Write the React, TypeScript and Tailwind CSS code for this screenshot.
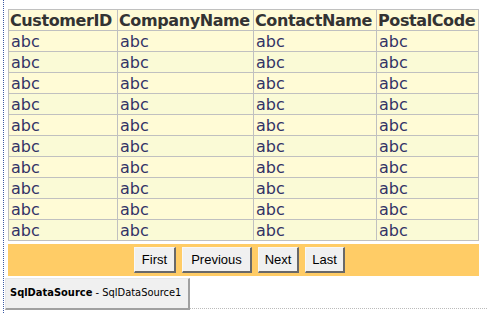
import React from "react";

const rows = Array.from({ length: 10 }, (_, i) => i);
const cols = ["CustomerID", "CompanyName", "ContactName", "PostalCode"];
const widths = [109, 136, 123, 102];

function Btn({ label, w }: { label: string; w: number }) {
  return (
    <div
      className="h-[26px] flex items-center justify-center bg-[#f0f0f0] border-t border-l border-t-[#f8f8f8] border-l-[#f8f8f8] border-b-2 border-r-2 border-b-[#696969] border-r-[#696969] text-[13px] text-black"
      style={{ width: w, fontFamily: '"Liberation Sans", Arial, sans-serif' }}
    >
      {label}
    </div>
  );
}

export default function App() {
  return (
    <div className="relative w-[487px] h-[313px] bg-white overflow-hidden">
      <div className="absolute left-[3px] top-0 bottom-0 border-l border-dotted border-[#3b5ba5]" />
      <div className="pl-[8px] pt-[9px]">
        <table
          className="border-collapse table-fixed w-[471px]"
          style={{ fontFamily: '"DejaVu Sans", Verdana, sans-serif' }}
        >
          <colgroup>
            {widths.map((w, i) => (
              <col key={i} style={{ width: w }} />
            ))}
          </colgroup>
          <thead>
            <tr className="bg-[#fffbd6]">
              {cols.map((c) => (
                <th
                  key={c}
                  className="border border-[#c0c0c0] h-[21px] p-0 pl-[1px] text-left font-bold text-[16px] tracking-[-0.4px] leading-[19px] text-[#333333] whitespace-nowrap"
                >
                  {c}
                </th>
              ))}
            </tr>
          </thead>
          <tbody>
            {rows.map((r) => (
              <tr key={r} className={r % 2 === 0 ? "bg-[#fffbd6]" : "bg-[#fafad6]"}>
                {cols.map((c) => (
                  <td
                    key={c}
                    className="border border-[#c0c0c0] h-[21px] p-0 pl-[2px] text-[16px] leading-[19px] text-[#333366] whitespace-nowrap"
                  >
                    abc
                  </td>
                ))}
              </tr>
            ))}
          </tbody>
        </table>
        <div className="mt-[3px] w-[471px] h-[32px] bg-[#ffcc66] flex items-center justify-center gap-[6px] pr-[8px]">
          <Btn label="First" w={42} />
          <Btn label="Previous" w={70} />
          <Btn label="Next" w={41} />
          <Btn label="Last" w={40} />
        </div>
      </div>
      <div className="flex items-end pl-[5px] mt-[2px]">
        <div
          className="w-[185px] h-[32px] bg-[#f0f0f0] border-t border-l border-[#e8e8e8] border-b-2 border-r-2 border-b-[#a0a0a0] border-r-[#a0a0a0] flex items-center pl-[4px] text-[11px] text-black whitespace-nowrap"
          style={{ fontFamily: '"DejaVu Sans Condensed", "DejaVu Sans", Tahoma, sans-serif' }}
        >
          <span className="font-bold">SqlDataSource</span>
          <span>&nbsp;- SqlDataSource1</span>
        </div>
        <div className="flex-1 border-b border-dotted border-[#bbbbbb] mb-[1px]" />
      </div>
    </div>
  );
}
